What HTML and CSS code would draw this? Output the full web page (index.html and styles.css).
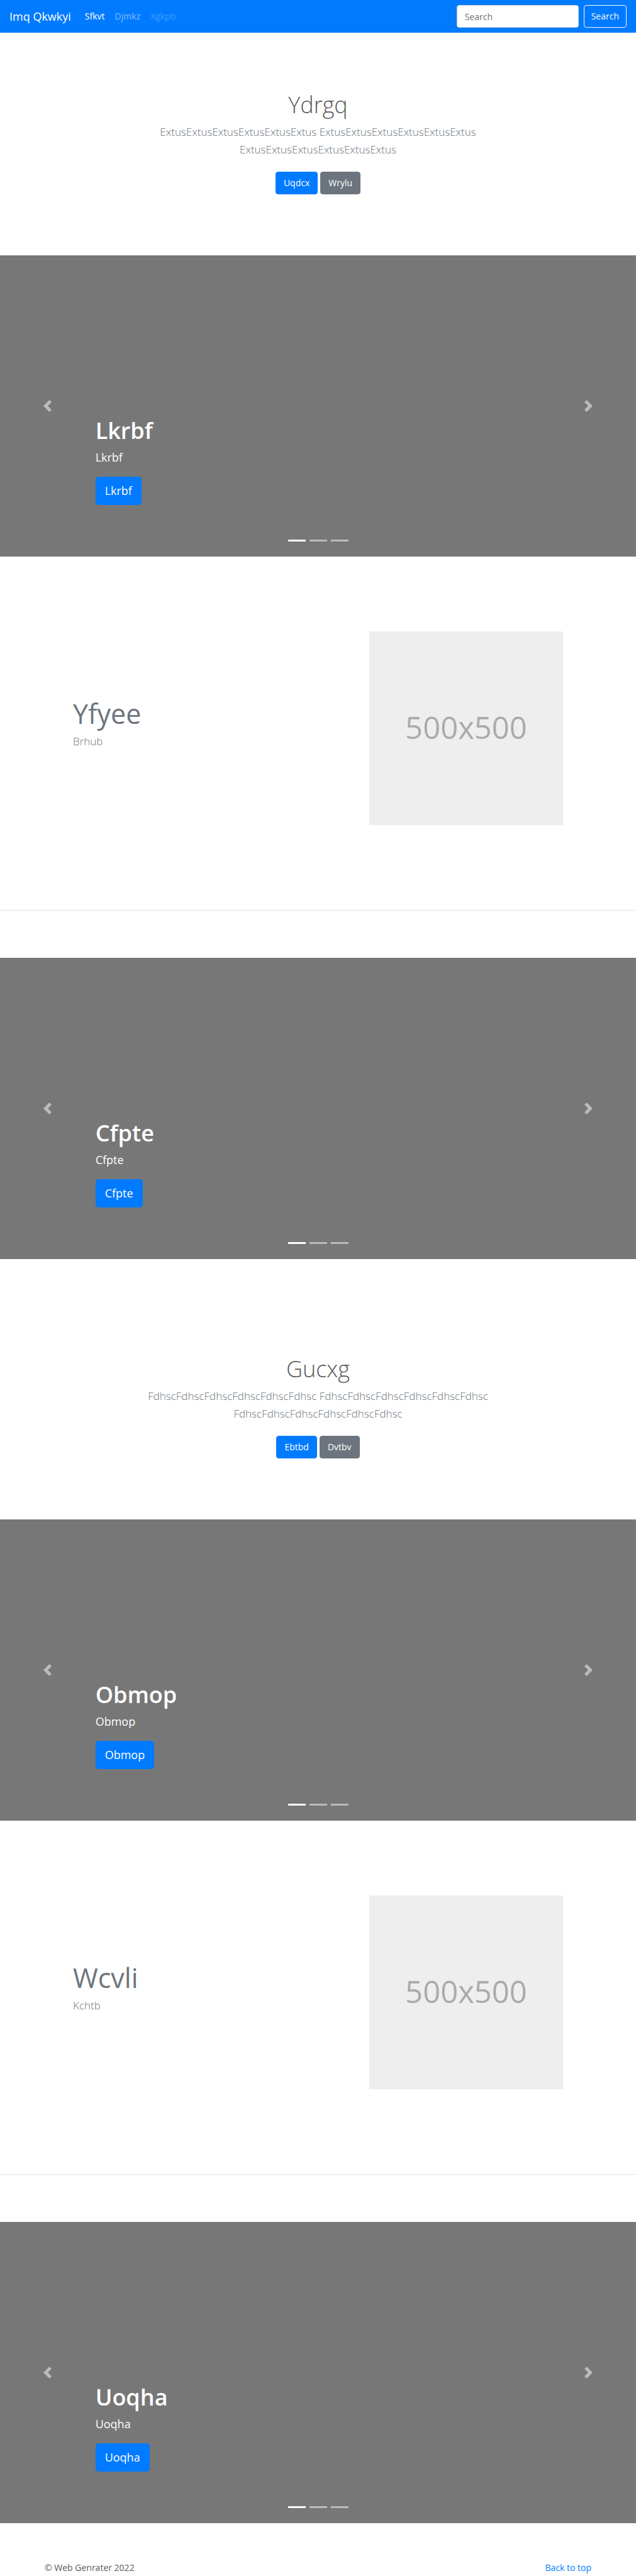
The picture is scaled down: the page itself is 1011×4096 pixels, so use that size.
FILE: index.html
```html
<!DOCTYPE html>
<html lang="en">
<head>
<meta charset="utf-8">
<meta name="viewport" content="width=device-width, initial-scale=1">
<title>Imq Qkwkyi</title>
<link rel="stylesheet" href="styles.css">
</head>
<body>
<header class="navbar" id="top">
  <a class="brand" href="#">Imq Qkwkyi</a>
  <nav class="nav">
    <a class="nav-link active" href="#">Sfkvt</a>
    <a class="nav-link" href="#">Djmkz</a>
    <a class="nav-link disabled" href="#" aria-disabled="true">Xgkpb</a>
  </nav>
  <form class="search">
    <input class="search-input" type="search" placeholder="Search" aria-label="Search">
    <button class="btn btn-outline" type="submit">Search</button>
  </form>
</header>

<main>
  <section class="hero">
    <h1 class="hero-title">Ydrgq</h1>
    <p class="hero-text">ExtusExtusExtusExtusExtusExtus ExtusExtusExtusExtusExtusExtus ExtusExtusExtusExtusExtusExtus</p>
    <div class="hero-actions">
      <a class="btn btn-primary" href="#">Uqdcx</a>
      <a class="btn btn-secondary" href="#">Wrylu</a>
    </div>
  </section>

  <section class="carousel" aria-label="Lkrbf">
    <div class="caption">
      <h2 class="caption-title">Lkrbf</h2>
      <p class="caption-text">Lkrbf</p>
      <a class="btn btn-primary btn-lg" href="#">Lkrbf</a>
    </div>
    <button class="control control-prev" type="button" aria-label="Previous"><svg class="chevron" viewBox="0 0 8 8"><path d="M5.25 0l-4 4 4 4 1.5-1.5-2.5-2.5 2.5-2.5-1.5-1.5z"/></svg></button>
    <button class="control control-next" type="button" aria-label="Next"><svg class="chevron" viewBox="0 0 8 8"><path d="M2.75 0l-1.5 1.5 2.5 2.5-2.5 2.5 1.5 1.5 4-4-4-4z"/></svg></button>
    <div class="indicators">
      <button class="indicator current" type="button" aria-label="Slide 1"></button>
      <button class="indicator" type="button" aria-label="Slide 2"></button>
      <button class="indicator" type="button" aria-label="Slide 3"></button>
    </div>
  </section>

  <section class="feature">
    <div class="feature-body">
      <div class="feature-copy">
        <h2 class="feature-title">Yfyee</h2>
        <p class="feature-text">Brhub</p>
      </div>
      <div class="placeholder">500x500</div>
    </div>
    <hr class="divider">
  </section>

  <section class="carousel" aria-label="Cfpte">
    <div class="caption">
      <h2 class="caption-title">Cfpte</h2>
      <p class="caption-text">Cfpte</p>
      <a class="btn btn-primary btn-lg" href="#">Cfpte</a>
    </div>
    <button class="control control-prev" type="button" aria-label="Previous"><svg class="chevron" viewBox="0 0 8 8"><path d="M5.25 0l-4 4 4 4 1.5-1.5-2.5-2.5 2.5-2.5-1.5-1.5z"/></svg></button>
    <button class="control control-next" type="button" aria-label="Next"><svg class="chevron" viewBox="0 0 8 8"><path d="M2.75 0l-1.5 1.5 2.5 2.5-2.5 2.5 1.5 1.5 4-4-4-4z"/></svg></button>
    <div class="indicators">
      <button class="indicator current" type="button" aria-label="Slide 1"></button>
      <button class="indicator" type="button" aria-label="Slide 2"></button>
      <button class="indicator" type="button" aria-label="Slide 3"></button>
    </div>
  </section>

  <section class="hero hero-spaced">
    <h2 class="hero-title">Gucxg</h2>
    <p class="hero-text">FdhscFdhscFdhscFdhscFdhscFdhsc FdhscFdhscFdhscFdhscFdhscFdhsc FdhscFdhscFdhscFdhscFdhscFdhsc</p>
    <div class="hero-actions">
      <a class="btn btn-primary" href="#">Ebtbd</a>
      <a class="btn btn-secondary" href="#">Dvtbv</a>
    </div>
  </section>

  <section class="carousel" aria-label="Obmop">
    <div class="caption">
      <h2 class="caption-title">Obmop</h2>
      <p class="caption-text">Obmop</p>
      <a class="btn btn-primary btn-lg" href="#">Obmop</a>
    </div>
    <button class="control control-prev" type="button" aria-label="Previous"><svg class="chevron" viewBox="0 0 8 8"><path d="M5.25 0l-4 4 4 4 1.5-1.5-2.5-2.5 2.5-2.5-1.5-1.5z"/></svg></button>
    <button class="control control-next" type="button" aria-label="Next"><svg class="chevron" viewBox="0 0 8 8"><path d="M2.75 0l-1.5 1.5 2.5 2.5-2.5 2.5 1.5 1.5 4-4-4-4z"/></svg></button>
    <div class="indicators">
      <button class="indicator current" type="button" aria-label="Slide 1"></button>
      <button class="indicator" type="button" aria-label="Slide 2"></button>
      <button class="indicator" type="button" aria-label="Slide 3"></button>
    </div>
  </section>

  <section class="feature">
    <div class="feature-body">
      <div class="feature-copy">
        <h2 class="feature-title">Wcvli</h2>
        <p class="feature-text">Kchtb</p>
      </div>
      <div class="placeholder">500x500</div>
    </div>
    <hr class="divider">
  </section>

  <section class="carousel" aria-label="Uoqha">
    <div class="caption">
      <h2 class="caption-title">Uoqha</h2>
      <p class="caption-text">Uoqha</p>
      <a class="btn btn-primary btn-lg" href="#">Uoqha</a>
    </div>
    <button class="control control-prev" type="button" aria-label="Previous"><svg class="chevron" viewBox="0 0 8 8"><path d="M5.25 0l-4 4 4 4 1.5-1.5-2.5-2.5 2.5-2.5-1.5-1.5z"/></svg></button>
    <button class="control control-next" type="button" aria-label="Next"><svg class="chevron" viewBox="0 0 8 8"><path d="M2.75 0l-1.5 1.5 2.5 2.5-2.5 2.5 1.5 1.5 4-4-4-4z"/></svg></button>
    <div class="indicators">
      <button class="indicator current" type="button" aria-label="Slide 1"></button>
      <button class="indicator" type="button" aria-label="Slide 2"></button>
      <button class="indicator" type="button" aria-label="Slide 3"></button>
    </div>
  </section>
</main>

<footer class="footer">
  <span>© Web Genrater 2022</span>
  <a class="footer-link" href="#top">Back to top</a>
</footer>
</body>
</html>
```
FILE: styles.css
```css
* {
  box-sizing: border-box;
}

body {
  margin: 0;
  background: #fff;
  color: #5a5a5a;
  font-family: "Open Sans", "Noto Sans", sans-serif;
  font-size: 14px;
  line-height: 22px;
}

h1, h2, p {
  margin: 0;
}

a {
  color: #007bff;
  text-decoration: none;
}

/* Navbar */
.navbar {
  display: flex;
  align-items: center;
  padding: 8px 15px;
  background: #007bff;
}

.brand {
  margin-right: 14px;
  color: #fff;
  font-size: 18px;
  line-height: 28px;
}

.nav {
  display: flex;
  flex: 1;
}

.nav-link {
  padding: 7px 8px;
  color: rgba(255, 255, 255, 0.5);
}

.nav-link.active {
  color: #fff;
}

.nav-link.disabled {
  color: rgba(255, 255, 255, 0.25);
}

.search {
  display: flex;
  gap: 8px;
}

.search-input {
  width: 194px;
  height: 36px;
  padding: 6px 12px;
  border: 1px solid #ced4da;
  border-radius: 4px;
  background: #fff;
  color: #495057;
  font: inherit;
}

.search-input::placeholder {
  color: #6c757d;
  opacity: 1;
}

/* Buttons */
.btn {
  display: inline-block;
  padding: 6px 12px;
  border: 1px solid transparent;
  border-radius: 4px;
  background: transparent;
  color: #fff;
  font-family: inherit;
  font-size: 14px;
  line-height: 22px;
  cursor: pointer;
}

.btn-primary {
  border-color: #007bff;
  background: #007bff;
}

.btn-secondary {
  border-color: #6c757d;
  background: #6c757d;
}

.btn-outline {
  padding: 6px 11px;
  border-color: #f8f9fa;
  color: #f8f9fa;
}

.btn-lg {
  padding: 8px 14px;
  border-radius: 5px;
  font-size: 18px;
  line-height: 27px;
}

/* Centred intro */
.hero {
  padding: 92px 15px 97px;
  text-align: center;
}

.hero-spaced {
  padding-top: 152px;
}

.hero-title {
  font-size: 36px;
  font-weight: 300;
  line-height: 45px;
  margin-bottom: 7px;
}

.hero-text {
  max-width: 600px;
  margin: 0 auto 21px;
  color: #6c757d;
  font-size: 17px;
  font-weight: 300;
  line-height: 28px;
}

.hero-actions {
  display: flex;
  justify-content: center;
  gap: 4px;
}

/* Carousel */
.carousel {
  position: relative;
  display: flex;
  flex-direction: column;
  justify-content: flex-end;
  min-height: 479px;
  padding: 0 15% 82px;
  background: #777;
  color: #fff;
}

.caption-title {
  margin-bottom: 6px;
  font-size: 36px;
  font-weight: 600;
  line-height: 45px;
}

.caption-text {
  margin-bottom: 17px;
  font-size: 18px;
  line-height: 28px;
}

.control {
  position: absolute;
  top: 0;
  bottom: 0;
  display: flex;
  align-items: center;
  justify-content: center;
  width: 15%;
  padding: 0;
  border: 0;
  background: none;
  opacity: 0.5;
  cursor: pointer;
}

.control-prev {
  left: 0;
}

.control-next {
  right: 0;
}

.chevron {
  width: 19px;
  height: 19px;
  fill: #fff;
}

.indicators {
  position: absolute;
  right: 0;
  bottom: 24px;
  left: 0;
  display: flex;
  justify-content: center;
  gap: 6px;
}

.indicator {
  width: 28px;
  height: 3px;
  padding: 0;
  border: 0;
  background: #fff;
  opacity: 0.5;
  cursor: pointer;
}

.indicator.current {
  opacity: 1;
}

/* Feature row */
.feature {
  padding: 119px 0 75px;
}

.feature-body {
  display: flex;
  align-items: center;
  justify-content: space-between;
  max-width: 779px;
  margin: 0 auto 135px;
}

.feature-copy {
  padding-bottom: 16px;
}

.feature-title {
  margin-bottom: 2px;
  color: #6c757d;
  font-size: 43px;
  font-weight: 400;
  line-height: 56px;
}

.feature-text {
  color: #6c757d;
  font-size: 17px;
  font-weight: 300;
  line-height: 28px;
}

.placeholder {
  display: flex;
  align-items: center;
  justify-content: center;
  width: 308px;
  height: 308px;
  padding-bottom: 4px;
  background: #eee;
  color: #aaa;
  font-size: 49px;
  line-height: 60px;
}

.divider {
  height: 1px;
  margin: 0;
  border: 0;
  background: #e5e5e5;
}

/* Footer */
.footer {
  display: flex;
  justify-content: space-between;
  max-width: 899px;
  margin: 0 auto;
  padding: 60px 15px 0;
}
```
